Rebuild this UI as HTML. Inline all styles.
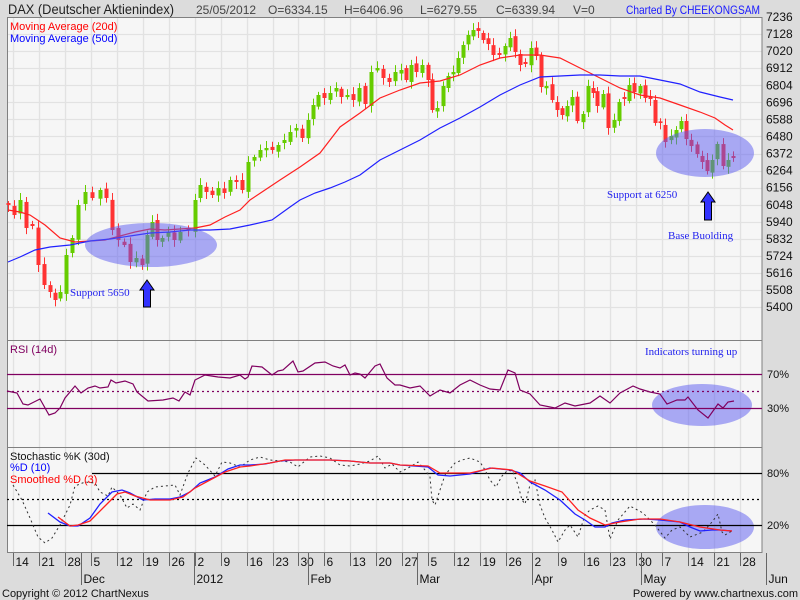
<!DOCTYPE html>
<html><head><meta charset="utf-8"><style>
html,body{margin:0;padding:0;background:#dcdcdc;width:800px;height:600px;overflow:hidden}
svg{display:block}
text{font-family:"Liberation Sans",sans-serif}
</style></head><body>
<svg id="s" width="800" height="600" xmlns="http://www.w3.org/2000/svg">
<rect x="0" y="0" width="800" height="600" fill="#dcdcdc"/>
<rect x="7" y="17" width="755" height="536" fill="#f6f6f6"/>
<g id="grid"></g>
<g fill="none" stroke="#808080" stroke-width="1">
<rect x="7.5" y="17.5" width="754.5" height="535"/>
<line x1="7" y1="340.5" x2="762" y2="340.5"/>
<line x1="7" y1="447.5" x2="762" y2="447.5"/>
</g>
<g font-size="12" fill="#444">
<text x="8" y="14" font-size="14" fill="#222" textLength="166" lengthAdjust="spacingAndGlyphs">DAX (Deutscher Aktienindex)</text>
<text x="196" y="14">25/05/2012</text>
<text x="268" y="14">O=6334.15</text>
<text x="344" y="14">H=6406.96</text>
<text x="420" y="14">L=6279.55</text>
<text x="496" y="14">C=6339.94</text>
<text x="573" y="14">V=0</text>
<text x="760" y="14" fill="#1a1aff" text-anchor="end" textLength="134" lengthAdjust="spacingAndGlyphs">Charted By CHEEKONGSAM</text>
</g>
<text x="10" y="30" font-size="11" fill="#ff0000">Moving Average (20d)</text>
<text x="10" y="42" font-size="11" fill="#0000ff">Moving Average (50d)</text>
<g id="axis" font-size="11" fill="#111"></g>
<g id="cand"></g>
<polyline fill="none" stroke="#ff2020" stroke-width="1.2" points="8,210 20,212 30,215 45,225 60,238 75,242 90,241 105,240 120,236 135,232 150,229 165,230 180,229 195,228 210,225 225,217 240,210 250,200 262,192 280,180 300,167 320,153 340,127 360,113 380,98 400,90 420,83 440,81 460,75 480,65 500,58 520,55 540,55 560,58 580,68 600,78 620,88 640,95 660,98 680,105 700,112 715,118 725,125 733,130"/>
<polyline fill="none" stroke="#2020ff" stroke-width="1.2" points="8,262 20,257 35,250 50,247 70,245 90,241 110,239 130,236 150,233 170,232 190,230 210,230 230,229 250,225 272,220 290,207 300,200 315,193 330,188 345,182 360,175 380,160 400,150 420,140 440,128 460,118 480,107 500,95 520,85 540,77 560,76 580,75 600,75 620,76 640,76 660,80 680,84 700,92 720,97 733,100"/>
<g fill="#5a5af0" fill-opacity="0.5">
<ellipse cx="151" cy="245" rx="66" ry="22"/>
<ellipse cx="705" cy="153" rx="49" ry="24"/>
<ellipse cx="702" cy="405" rx="50" ry="21"/>
<ellipse cx="705" cy="527" rx="49" ry="22"/>
</g>
<g fill="#3333ff" stroke="#000" stroke-width="1">
<path d="M147 280 L140 290 L143.5 290 L143.5 307 L150.5 307 L150.5 290 L154 290 Z"/>
<path d="M708 192 L701 202 L704.5 202 L704.5 220 L711.5 220 L711.5 202 L715 202 Z"/>
</g>
<g font-size="11" fill="#2222ee">
<text x="70" y="296" style="font-family:'Liberation Serif',serif">Support 5650</text>
<text x="607" y="198" style="font-family:'Liberation Serif',serif">Support at 6250</text>
<text x="668" y="239" style="font-family:'Liberation Serif',serif">Base Buolding</text>
<text x="645" y="355" style="font-family:'Liberation Serif',serif">Indicators turning up</text>
</g>
<text x="10" y="353" font-size="11" fill="#800060">RSI (14d)</text>
<g stroke="#800060" stroke-width="1.2">
<line x1="7" y1="374.5" x2="762" y2="374.5"/>
<line x1="7" y1="408.5" x2="762" y2="408.5"/>
<line x1="7" y1="391.5" x2="762" y2="391.5" stroke-dasharray="2,3"/>
</g>
<polyline fill="none" stroke="#800060" stroke-width="1.2" points="7,391 12,392 17,393 23,404 28,405 40,399 49,415 55,413 60,408 65,398 75,386 81,393 88,388 95,386 100,388 108,387 111,380 116,383 125,381 133,384 137,392 148,401 163,400 173,398 179,401 185,392 190,395 195,380 205,375 218,377 230,378 240,375 245,379 248,377 252,366 262,367 272,375 278,371 283,370 293,361 298,372 303,371 315,363 325,362 333,366 340,368 345,365 350,375 355,373 360,374 365,378 370,372 375,366 380,364 387,378 395,385 400,385 410,388 420,386 430,396 440,390 450,393 460,385 470,380 480,385 490,389 500,390 508,370 515,373 520,390 530,394 540,405 555,408 565,403 575,406 590,403 600,396 610,403 620,393 633,386 640,389 650,392 660,394 667,404 677,400 685,400 688,397 698,410 708,418 718,404 723,408 728,402 734,401"/>
<text x="767" y="378" font-size="11" fill="#111">70%</text>
<text x="767" y="412" font-size="11" fill="#111">30%</text>
<text x="10" y="460" font-size="11" fill="#111">Stochastic %K (30d)</text>
<text x="10" y="471" font-size="11" fill="#0000ff">%D (10)</text>
<text x="10" y="483" font-size="11" fill="#ff0000">Smoothed %D (3)</text>
<g stroke="#000" stroke-width="1.2">
<line x1="92" y1="473.5" x2="762" y2="473.5"/>
<line x1="7" y1="525.5" x2="762" y2="525.5"/>
<line x1="7" y1="499.5" x2="762" y2="499.5" stroke-dasharray="2,3"/>
</g>
<text x="767" y="477" font-size="11" fill="#111">80%</text>
<text x="767" y="529" font-size="11" fill="#111">20%</text>
<polyline fill="none" stroke="#333" stroke-width="1" stroke-dasharray="2,3" points="13,485 22,500 30,518 38,537 45,543 52,538 60,525 70,505 75,486 85,482 95,483 100,492 108,496 112,487 120,495 127,508 133,504 140,510 147,492 155,487 165,486 175,485 180,495 188,473 196,458 205,465 215,476 222,462 230,463 240,467 250,460 260,457 270,460 280,461 290,462 298,467 305,461 310,457 320,456 330,458 340,465 350,466 360,464 370,461 378,456 385,468 392,464 400,472 410,467 418,462 425,470 430,477 432,500 435,505 440,490 445,475 455,463 462,460 470,458 480,462 485,470 490,480 496,487 502,476 508,470 513,472 518,485 522,500 525,504 530,485 535,480 540,505 545,518 552,530 558,542 565,530 570,525 578,537 585,515 590,510 598,506 605,510 610,539 618,520 630,506 643,513 655,525 665,538 672,530 680,527 690,537 703,532 712,522 718,514 722,532 725,535 732,531"/>
<polyline fill="none" stroke="#2020ff" stroke-width="1.3" points="48,513 60,522 70,526 78,526 90,518 100,504 112,492 122,490 130,493 143,500 155,499 170,499 180,497 190,492 200,483 215,477 228,469 240,465 250,465 265,464 280,461 295,460 310,460 330,460 350,461 370,463 390,463 400,465 428,467 438,475 450,476 470,474 490,468 510,470 520,473 530,482 545,490 560,500 575,514 585,520 595,527 605,527 612,523 625,520 645,519 660,520 680,522 690,527 700,531 712,530 720,530 732,531"/>
<polyline fill="none" stroke="#ff2020" stroke-width="1.3" points="58,517 70,526 78,525 90,521 105,506 117,494 125,492 135,496 150,500 170,500 183,497 195,488 210,480 225,472 240,467 250,466 270,463 285,460 310,460 330,460 350,461 370,463 390,463 400,465 428,466 440,473 470,473 492,468 512,470 530,481 545,486 562,492 578,510 590,518 605,525 620,522 640,519 660,519 680,522 700,527 720,530 732,531"/>
<text x="2" y="597" font-size="11" fill="#111">Copyright © 2012 ChartNexus</text>
<text x="798" y="597" font-size="11" fill="#111" text-anchor="end">Powered by www.chartnexus.com</text>
</svg>
<script>
var NS="http://www.w3.org/2000/svg";
function el(p,t,a,txt){var e=document.createElementNS(NS,t);for(var k in a)e.setAttribute(k,a[k]);if(txt!=null)e.textContent=txt;p.appendChild(e);return e;}
var grid=document.getElementById('grid'),axis=document.getElementById('axis'),cand=document.getElementById('cand');
var sp=25.95;
var labs=["14","21","28","5","12","19","26","2","9","16","23","30","6","13","20","27","5","12","19","26","2","9","16","23","30","7","14","21","28"];
for(var k=0;k<29;k++){var x=Math.round(13+k*sp)+0.5;
 el(grid,'line',{x1:x,y1:17,x2:x,y2:553,stroke:'#e2e2e2','stroke-width':1.3});
 el(axis,'line',{x1:x,y1:553,x2:x,y2:566,stroke:'#666'});
 el(axis,'text',{x:x+2,y:566,'font-size':12},labs[k]);}
var months=[[81,"Dec"],[194,"2012"],[308,"Feb"],[417,"Mar"],[532,"Apr"],[641,"May"],[766,"Jun"]];
months.forEach(function(m){var x=m[0]+0.5;el(axis,'line',{x1:x,y1:553,x2:x,y2:585,stroke:'#666'});el(axis,'text',{x:x+2,y:583,'font-size':12},m[1]);});
for(var i=0;i<18;i++){var p=7236-108*i;var y=17+i*17.07;
 if(i>0)el(grid,'line',{x1:7,y1:Math.round(y)+0.5,x2:762,y2:Math.round(y)+0.5,stroke:'#e2e2e2','stroke-width':1.3});
 el(axis,'text',{x:766,y:y+4,'font-size':12},String(p));}
var kp=[[8,205],[14,215],[20,200],[26,228],[32,226],[38,265],[44,285],[50,292],[55,300],[60,292],[66,255],[72,238],[78,205],[85,192],[92,198],[100,190],[106,198],[112,230],[118,240],[124,245],[130,262],[136,258],[142,265],[147,235],[152,222],[157,240],[162,238],[168,232],[174,240],[180,232],[188,230],[195,200],[200,185],[206,192],[212,195],[218,188],[224,193],[230,180],[236,182],[242,190],[248,162],[254,157],[260,150],[266,148],[272,150],[278,145],[284,140],[290,132],[296,128],[302,138],[308,120],[313,105],[318,95],[324,98],[330,93],[336,88],[341,97],[347,95],[353,100],[359,88],[365,104],[371,72],[377,68],[383,78],[389,82],[395,72],[401,70],[406,80],[411,65],[416,72],[422,65],[428,80],[432,110],[437,108],[443,86],[448,76],[453,72],[458,58],[463,45],[468,35],[473,30],[478,31],[483,40],[488,44],[493,55],[499,55],[505,46],[510,38],[515,52],[520,65],[525,64],[531,48],[536,56],[541,87],[546,86],[552,100],[557,110],[562,115],[567,106],[572,97],[577,121],[583,114],[588,86],[593,93],[597,106],[603,94],[608,128],[614,120],[619,102],[624,99],[629,85],[634,92],[640,86],[645,98],[650,99],[655,123],[660,123],[665,142],[671,136],[676,130],[681,121],[686,139],[691,146],[697,154],[702,162],[707,171],[712,160],[717,144],[723,166],[728,160],[733,158]];
var prev=205;
kp.forEach(function(q,i){var x=q[0],c=q[1];var o=prev+2*Math.sin(i*2.7);
 if(Math.abs(o-c)<1.5)o=c-2;
 var top=Math.min(o,c),bot=Math.max(o,c);
 var hi=top-2-5*Math.abs(Math.sin(i*2.3)),lo=bot+2+5*Math.abs(Math.cos(i*1.9));
 var col=c<o?'#66cc00':'#ff3333';
 el(cand,'line',{x1:x+0.5,y1:hi,x2:x+0.5,y2:lo,stroke:col,'stroke-width':1});
 el(cand,'rect',{x:x-1.5,y:top,width:4,height:Math.max(1.5,bot-top),fill:col});
 prev=c;});
</script>
</body></html>
